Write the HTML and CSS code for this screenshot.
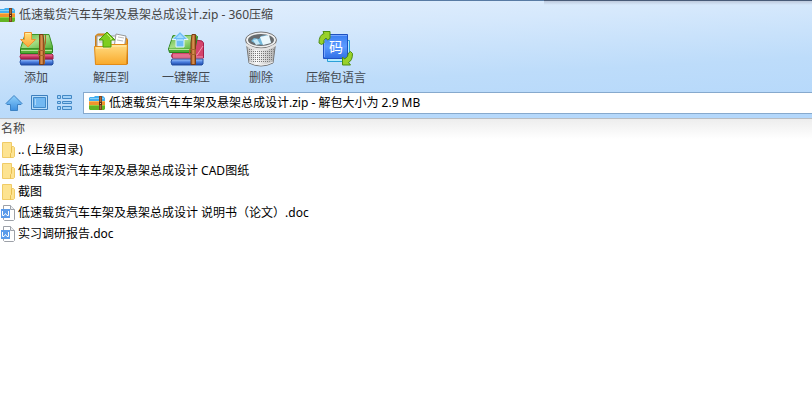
FILE: index.html
```html
<!DOCTYPE html>
<html lang="zh-CN">
<head>
    <meta charset="UTF-8">
    <meta name="viewport" content="width=device-width, initial-scale=1.0">
    <title>低速载货汽车车架及悬架总成设计.zip - 360压缩</title>
    <link rel="stylesheet" href="styles.css">
</head>
<body>
    <!-- shared icons -->
    <svg class="defs" aria-hidden="true">
        <defs>
            <linearGradient id="gBlue" x1="0" y1="0" x2="0" y2="1">
                <stop offset="0" stop-color="#8fd0fb"/><stop offset="1" stop-color="#3c8fe0"/>
            </linearGradient>
            <linearGradient id="gGreen" x1="0" y1="0" x2="1" y2="1">
                <stop offset="0" stop-color="#5fb548"/><stop offset=".5" stop-color="#a5dd84"/><stop offset="1" stop-color="#4fae35"/>
            </linearGradient>
            <linearGradient id="gPink" x1="0" y1="0" x2="0" y2="1">
                <stop offset="0" stop-color="#f08aa6"/><stop offset=".5" stop-color="#cf3f6b"/><stop offset="1" stop-color="#9c1440"/>
            </linearGradient>
            <linearGradient id="gBook" x1="0" y1="0" x2="0" y2="1">
                <stop offset="0" stop-color="#a9cbfb"/><stop offset=".5" stop-color="#4b7fe0"/><stop offset="1" stop-color="#1e46a4"/>
            </linearGradient>
            <linearGradient id="gOrange" x1="0" y1="0" x2="0" y2="1">
                <stop offset="0" stop-color="#ffe07a"/><stop offset="1" stop-color="#fba638"/>
            </linearGradient>
            <linearGradient id="gBelt" x1="0" y1="0" x2="1" y2="0">
                <stop offset="0" stop-color="#a35a22"/><stop offset=".5" stop-color="#dc9452"/><stop offset="1" stop-color="#96501d"/>
            </linearGradient>
            <linearGradient id="gFolder" x1="0" y1="0" x2="0" y2="1">
                <stop offset="0" stop-color="#ffdc82"/><stop offset="1" stop-color="#f9a92b"/>
            </linearGradient>
            <linearGradient id="gCode" x1="0" y1="0" x2="0" y2="1">
                <stop offset="0" stop-color="#3a7df0"/><stop offset=".5" stop-color="#5b9bff"/><stop offset="1" stop-color="#2f6fe6"/>
            </linearGradient>
            <linearGradient id="gMetal" x1="0" y1="0" x2="1" y2="0">
                <stop offset="0" stop-color="#b5b5b5"/><stop offset=".35" stop-color="#fafafa"/><stop offset="1" stop-color="#adadad"/>
            </linearGradient>
            <pattern id="mesh" width="2" height="2" patternUnits="userSpaceOnUse">
                <rect width="1" height="1" fill="#777"/>
            </pattern>
        </defs>
        <symbol id="zip" viewBox="0 0 16 14">
            <path d="M0 2 1 1h4l1-1h8l2 2v3H0z" fill="#42aef0"/>
            <path d="M1 2h14v1H1z" fill="#86d2fa"/>
            <path d="M0 5h16v4H0z" fill="#f2932e"/>
            <path d="M0 5h16v1H0z" fill="#fbb95a"/>
            <path d="M0 9h16v4l-1 1H1l-1-1z" fill="#62b424"/>
            <path d="M0 9h16v1H0z" fill="#95d040"/>
            <path d="M10 0h3v14h-3z" fill="#7d431f"/>
            <path d="M11 1h1v12h-1z" fill="#a96c3c"/>
            <path d="M10 6h3v3h-3z" fill="#5c2e12"/>
            <path d="M11 7h1v1h-1z" fill="#e5c27c"/>
        </symbol>
        <symbol id="folder" viewBox="0 0 14 16">
            <path d="M1.500.5h9v4h2l1 1v9l-1 1h-11z" fill="#fde391" stroke="#f0cb66"/>
            <path d="M10.500 4.500v6l-1 1v4" fill="none" stroke="#e9bf50"/>
        </symbol>
        <symbol id="doc" viewBox="0 0 14 16">
            <path d="M2.500.5h7l4 4v10l-1 1h-9l-1-1z" fill="#fff" stroke="#9da1a8"/>
            <path d="M9.500.5v4h4" fill="#eef0f2" stroke="#9da1a8"/>
            <path d="M0 4h9v9H0z" fill="#5b9bea"/>
            <path d="M1.500 6v4.500H3l1.500-2 1.500 2h1.500V6" fill="none" stroke="#fff"/>
        </symbol>
    </svg>

    <header class="window-head">
        <div class="title-bar">
            <svg class="zip-icon"><use href="#zip"/></svg>
            <h1>低速载货汽车车架及悬架总成设计.zip - 360压缩</h1>
        </div>

        <div class="toolbar">
            <button type="button">
                <svg viewBox="0 0 36 36">
                    <path d="M3 28h31l1 2v3l-1 1H3q-2-3 0-6z" fill="url(#gBook)" stroke="#2450a5"/>
                    <path d="M3 23h31l1 1v4H3q-2-2 0-5z" fill="url(#gPink)" stroke="#a51f49"/>
                    <path d="m2.500 17.500 32-2v6l-1 1h-31z" fill="#52ad36" stroke="#2b7d1d"/>
                    <path d="M3 19.500h31" stroke="#b5e59a"/>
                    <path d="M2.500 17.500 7 3.500h24l3.500 12v2z" fill="url(#gGreen)" stroke="#3c9429"/>
                    <path d="M21.500 3.500h3.500l1 9v21h-4.500z" fill="url(#gBelt)" stroke="#7b3d12"/>
                    <path d="M27.500 4v8l-1 3v18" fill="none" stroke="#a86428"/>
                    <path d="M20.500 19.500h6v5h-6z" fill="none" stroke="#a5622c"/>
                    <path d="M6.500 1.500h7v7h4L10 16 2.500 8.500h4z" fill="url(#gOrange)" stroke="#ec9330"/>
                    <path d="M7.500 2.500h5" stroke="#fff0a8"/>
                </svg>
                <span>添加</span>
            </button>
            <button type="button">
                <svg viewBox="0 0 36 36">
                    <path d="M2.500 33V5l2-2h9l3 4h17l1 2v24z" fill="#e99a22" stroke="#c87a15"/>
                    <path d="M4 5h25v12H4z" fill="#f4f4f4" stroke="#999"/>
                    <path d="m23 3 10 2-2 14-10-2z" fill="#fff" stroke="#999"/>
                    <path d="m25 6 6 1M24 9l6 1M6 8h6M6 11h6" stroke="#bbb"/>
                    <path d="M1.500 15.500h14l3-2h16l-1 20h-31z" fill="url(#gFolder)" stroke="#e18b19"/>
                    <path d="M3 17h13l3-2h14" fill="none" stroke="#ffefb5"/>
                    <path d="M14 1 22 9h-4v7h-8V9H6z" fill="#7fce20" stroke="#4b9b0d"/>
                    <path d="m14 3 5 5h-2" fill="none" stroke="#c9f37f"/>
                </svg>
                <span>解压到</span>
            </button>
            <button type="button">
                <svg viewBox="0 0 36 36">
                    <path d="M4 28h31v5l-1 1H4q-2-3 0-6z" fill="url(#gBook)" stroke="#2450a5"/>
                    <path d="m4.500 22.500 2-4L28 9l6 1 1.500 2v15h-31q-2-2 0-4.500z" fill="#d4446c" stroke="#a51f49"/>
                    <path d="M5 24h24l6-9M5 26h30" fill="none" stroke="#f29bb3"/>
                    <path d="M.5 18 5 4.500h23l1.500 1-3 15-1 1H1.500z" fill="#4cab35" stroke="#2b8120"/>
                    <path d="M1 17.500 5.500 4.500h23l-3 13z" fill="url(#gGreen)"/>
                    <path d="M1 18.500h25" stroke="#b5e59a"/>
                    <path d="M24 3.500h3.500v30H23V12z" fill="url(#gBelt)" stroke="#7b3d12"/>
                    <path d="M21.500 18.500h6v5h-6z" fill="none" stroke="#a5622c"/>
                    <path d="m12 .5 8 8h-4v7.500H8V8.500H4z" fill="#6dbdf7" stroke="#e3f4ff"/>
                    <path d="m12 3 4 4H8zM9 8h6v2H9z" fill="#a3daff"/>
                </svg>
                <span>一键解压</span>
            </button>
            <button type="button">
                <svg viewBox="0 0 36 36">
                    <path d="M3 9h30l-3 23q-12 6-24 0z" fill="url(#gMetal)" stroke="#777"/>
                    <path d="M5 17q13 5 26 0l-2 13q-11 4-22 0z" fill="url(#mesh)"/>
                    <ellipse cx="18" cy="9" rx="15.500" ry="8" fill="#eee" stroke="#777"/>
                    <ellipse cx="18" cy="9" rx="13" ry="6" fill="#676b6e"/>
                    <path d="m8 10 3-3 5 1 2-3 6-1 4 7q-10 6-20-1z" fill="#72b8da"/>
                    <path d="m17 6 9-2 2 8-8 2z" fill="#eaf7fc"/>
                    <path d="m10 9 4-1 3 5-4 1z" fill="#c7e9f7"/>
                    <path d="M3 12q15 11 30 0v3q-15 9-30 0z" fill="#e3e3e3"/>
                    <path d="M6 31q12 6 24 0" fill="none" stroke="#eee"/>
                </svg>
                <span>删除</span>
            </button>
            <button type="button">
                <svg viewBox="0 0 36 36">
                    <path d="M9.500 9.500h22v21h-22z" fill="#b5ecff" stroke="#2ba0d8"/>
                    <path d="M5.500 3.500h24v24h-24z" fill="url(#gCode)" stroke="#1f51c0"/>
                    <path d="M6.500 26V4.500H29" fill="none" stroke="#77a6ff"/>
                    <text class="code-glyph" x="18" y="21">码</text>
                    <path d="M3.500 13.500 1 12q0-8 5-9.500l-1-2h7v7L9.500 9 8 7q-3 2-2 5z" fill="#99d12a" stroke="#4d8d13" stroke-linejoin="round"/>
                    <path d="m32.500 20.500 2 2q0 7-4 9l2 2.500h-8v-8l2 2q4-2 4-6z" fill="#99d12a" stroke="#4d8d13" stroke-linejoin="round"/>
                </svg>
                <span>压缩包语言</span>
            </button>
        </div>

        <div class="address-row">
            <nav class="nav-buttons">
                <button type="button" aria-label="向上">
                    <svg viewBox="0 0 18 16"><path d="m9 .5 8 8-1 1h-3.500v6h-7v-6H2l-1-1z" fill="url(#gBlue)" stroke="#3c82c4"/></svg>
                </button>
                <button type="button" aria-label="预览">
                    <svg viewBox="0 0 18 16"><path d="M1.500.5h16v14h-16z" fill="#b9defb" stroke="#3d7fbe"/><path d="M3.500 2.500h12v10h-12z" fill="#72b8f2" stroke="#4189c8"/><path d="M5 5h1M5 7h1M5 9h1" stroke="#e3f4ff"/></svg>
                </button>
                <button type="button" aria-label="列表">
                    <svg viewBox="0 0 18 16"><path d="M2.500.5h3v3h-3zm5 0h9v3h-9zm-5 6h3v2h-3zm5 0h9v2h-9zm-5 5h3v3h-3zm5 0h9v3h-9z" fill="#a2d2f8" stroke="#4388c5"/></svg>
                </button>
            </nav>
            <label class="address">
                <svg class="zip-icon"><use href="#zip"/></svg>
                <input type="text" aria-label="路径" value="低速载货汽车车架及悬架总成设计.zip - 解包大小为 2.9 MB">
            </label>
        </div>
        <div class="top-shade"></div>
    </header>

    <main class="file-panel">
        <table class="files">
            <thead>
                <tr><th scope="col">名称</th></tr>
            </thead>
            <tbody>
                <tr><td><div class="file"><svg><use href="#folder"/></svg>.. (上级目录)</div></td></tr>
                <tr><td><div class="file"><svg><use href="#folder"/></svg>低速载货汽车车架及悬架总成设计 CAD图纸</div></td></tr>
                <tr><td><div class="file"><svg><use href="#folder"/></svg>截图</div></td></tr>
                <tr><td><div class="file"><svg><use href="#doc"/></svg>低速载货汽车车架及悬架总成设计 说明书（论文）.doc</div></td></tr>
                <tr><td><div class="file"><svg><use href="#doc"/></svg>实习调研报告.doc</div></td></tr>
            </tbody>
        </table>
    </main>
</body>
</html>
```
FILE: styles.css
```css
*{
    margin: 0;
    padding: 0;
    box-sizing: border-box;
}
body {
    background-color: #fff;
    color: #000;
    font: 12px/18px "Noto Sans", "Noto Sans CJK SC", sans-serif;
}
button,
input {
    border: 0;
    background: none;
    font: inherit;
    color: inherit;
}
svg {
    display: block;
    flex: none;
}
.defs {
    position: absolute;
    width: 0;
    height: 0;
}

/* window head */
.window-head {
    position: relative;
    border-top: 1px solid #587ba4;
    border-bottom: 1px solid #b9bdc2;
    background: linear-gradient(177deg, #e4f0fd 0%, #d5e8fc 28%, #bddcfa 62%, #b3d7fb 100%);
}
.top-shade {
    position: absolute;
    top: -1px;
    right: 0;
    width: 33%;
    height: 5px;
    border-top: 1px solid #485b78;
    background: linear-gradient(#bdc9dc, transparent);
}
.title-bar {
    display: flex;
    align-items: center;
    gap: 4px;
    height: 27px;
}
.title-bar h1 {
    font-size: 12px;
    font-weight: normal;
    color: #444;
}
.zip-icon {
    width: 16px;
    height: 14px;
}
.title-bar .zip-icon {
    margin-left: -1px;
}

.toolbar {
    display: flex;
    gap: 3px;
    height: 63px;
    padding-top: 3px;
    color: #424850;
}
.toolbar button {
    display: flex;
    flex-direction: column;
    align-items: center;
    width: 72px;
    white-space: nowrap;
}
.toolbar svg {
    width: 36px;
    height: 36px;
}
.toolbar span {
    margin-top: 2px;
}
.code-glyph {
    fill: #fff;
    font-size: 14px;
    text-anchor: middle;
}

.address-row {
    display: flex;
    gap: 10px;
    height: 27px;
}
.nav-buttons {
    display: flex;
    align-items: center;
    gap: 7px;
    height: 23px;
    padding-left: 5px;
}
.nav-buttons svg {
    width: 18px;
    height: 16px;
}
.address {
    display: flex;
    flex: 1;
    align-items: center;
    gap: 4px;
    height: 22px;
    margin-top: 1px;
    padding-left: 5px;
    border: 1px solid #86a9cd;
    border-right: 0;
    background-color: #fff;
}
.address input {
    flex: 1;
    min-width: 0;
    outline: none;
}

/* file list */
.file-panel {
    background: linear-gradient(#ededed, #fff 20px);
}
.files {
    width: 100%;
    border-collapse: collapse;
}
.files th {
    height: 20px;
    padding-left: 1px;
    font-weight: normal;
    text-align: left;
    color: #444;
}
.file {
    display: flex;
    align-items: center;
    gap: 3px;
    height: 21px;
    padding-left: 1px;
}
.file svg {
    width: 14px;
    height: 16px;
}
```
